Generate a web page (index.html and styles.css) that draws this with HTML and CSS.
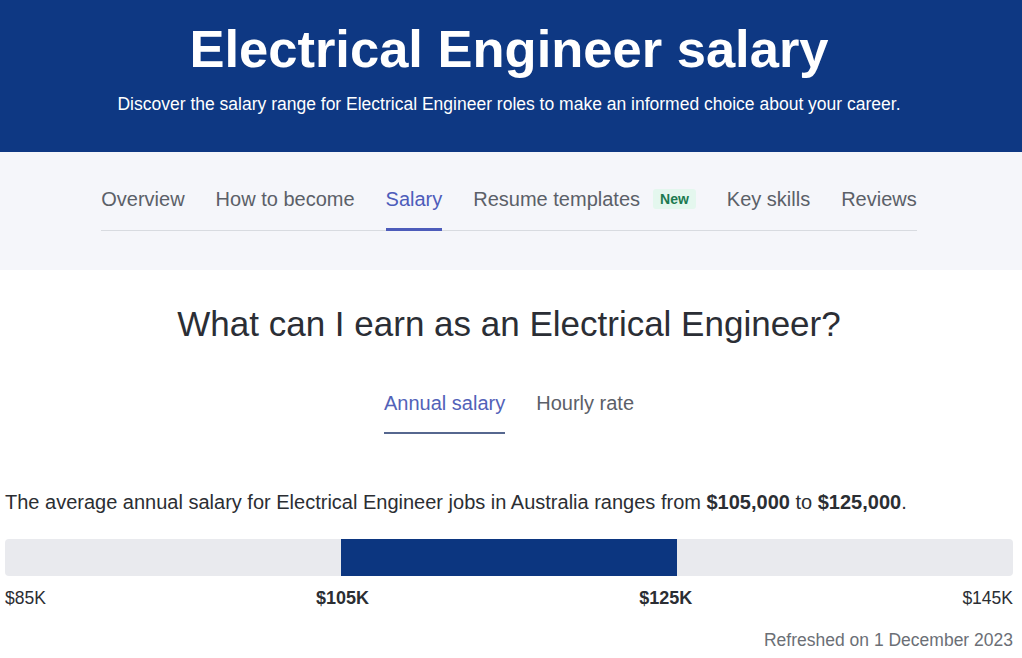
FILE: index.html
```html
<!DOCTYPE html>
<html lang="en">
<head>
<meta charset="utf-8">
<title>Electrical Engineer salary</title>
<link rel="stylesheet" href="styles.css">
</head>
<body>
<header class="hero">
  <h1 class="hero-title">Electrical Engineer salary</h1>
  <p class="hero-sub">Discover the salary range for Electrical Engineer roles to make an informed choice about your career.</p>
</header>
<section class="subnav">
  <ul class="subnav-list">
    <li class="subnav-item">Overview</li>
    <li class="subnav-item">How to become</li>
    <li class="subnav-item active">Salary</li>
    <li class="subnav-item">Resume templates <span class="badge">New</span></li>
    <li class="subnav-item">Key skills</li>
    <li class="subnav-item">Reviews</li>
  </ul>
</section>
<main class="content">
  <h2 class="question">What can I earn as an Electrical Engineer?</h2>
  <div class="tabs">
    <div class="tab active">Annual salary</div>
    <div class="tab">Hourly rate</div>
  </div>
  <p class="summary">The average annual salary for Electrical Engineer jobs in Australia ranges from <strong>$105,000</strong> to <strong>$125,000</strong>.</p>
  <div class="bar">
    <div class="bar-seg"></div>
    <div class="bar-seg fill"></div>
    <div class="bar-seg"></div>
  </div>
  <div class="labels">
    <span class="label">$85K</span>
    <span class="label strong">$105K</span>
    <span class="label strong">$125K</span>
    <span class="label">$145K</span>
  </div>
  <p class="refreshed">Refreshed on 1 December 2023</p>
</main>
</body>
</html>
```

FILE: styles.css
```css
html, body {
  margin: 0;
  padding: 0;
  background: #ffffff;
  font-family: "Liberation Sans", Arial, sans-serif;
}

.hero {
  background: #0e3883;
  color: #ffffff;
  text-align: center;
  padding: 18px 9px 36px 5px;
}

.hero-title {
  margin: 0;
  font-size: 52.5px;
  line-height: 62px;
  font-weight: 700;
}

.hero-sub {
  margin: 12px 0 0;
  font-size: 17.5px;
  line-height: 24px;
}

.subnav {
  background: #f5f6fa;
  padding: 35px 9px 39px 5px;
  display: flex;
  justify-content: center;
}

.subnav-list {
  list-style: none;
  margin: 0;
  padding: 0;
  display: flex;
  gap: 31px;
  border-bottom: 1px solid #d8dbe0;
}

.subnav-item {
  font-size: 20px;
  line-height: 24px;
  color: #5b6068;
  padding-bottom: 17px;
  border-bottom: 3px solid transparent;
  margin-bottom: -1px;
  display: flex;
  align-items: center;
}

.subnav-item.active {
  color: #4d5cba;
  border-bottom-color: #4d5cba;
}

.badge {
  margin-left: 13px;
  background: #e4f7ee;
  color: #1c7a50;
  font-size: 14px;
  font-weight: 700;
  line-height: 20px;
  padding: 0 7px;
  border-radius: 3px;
}

.content {
  padding: 0 9px 20px 5px;
}

.question {
  margin: 33px 0 0;
  text-align: center;
  font-size: 35px;
  line-height: 42px;
  font-weight: 400;
  color: #2b2e35;
}

.tabs {
  margin-top: 46px;
  display: flex;
  justify-content: center;
  gap: 31px;
}

.tab {
  font-size: 20px;
  line-height: 24px;
  color: #5b6068;
  padding-bottom: 17px;
  border-bottom: 2px solid transparent;
}

.tab.active {
  color: #5262b8;
  border-bottom-color: #56678f;
}

.summary {
  margin: 54px 0 0;
  font-size: 20px;
  line-height: 28px;
  color: #2b2e33;
}

.summary strong {
  font-weight: 700;
}

.bar {
  margin-top: 23px;
  height: 37px;
  display: flex;
  background: #e9eaee;
  border-radius: 4px;
  overflow: hidden;
}

.bar-seg {
  flex: 1;
}

.bar-seg.fill {
  background: #0c3680;
}

.labels {
  margin-top: 12px;
  display: flex;
  justify-content: space-between;
  align-items: baseline;
}

.label {
  font-size: 17.5px;
  line-height: 20px;
  color: #2b2e33;
}

.label.strong {
  font-size: 18px;
  font-weight: 700;
}

.refreshed {
  margin: 22px 0 0;
  text-align: right;
  font-size: 17.5px;
  line-height: 20px;
  color: #6b6f76;
}
```
